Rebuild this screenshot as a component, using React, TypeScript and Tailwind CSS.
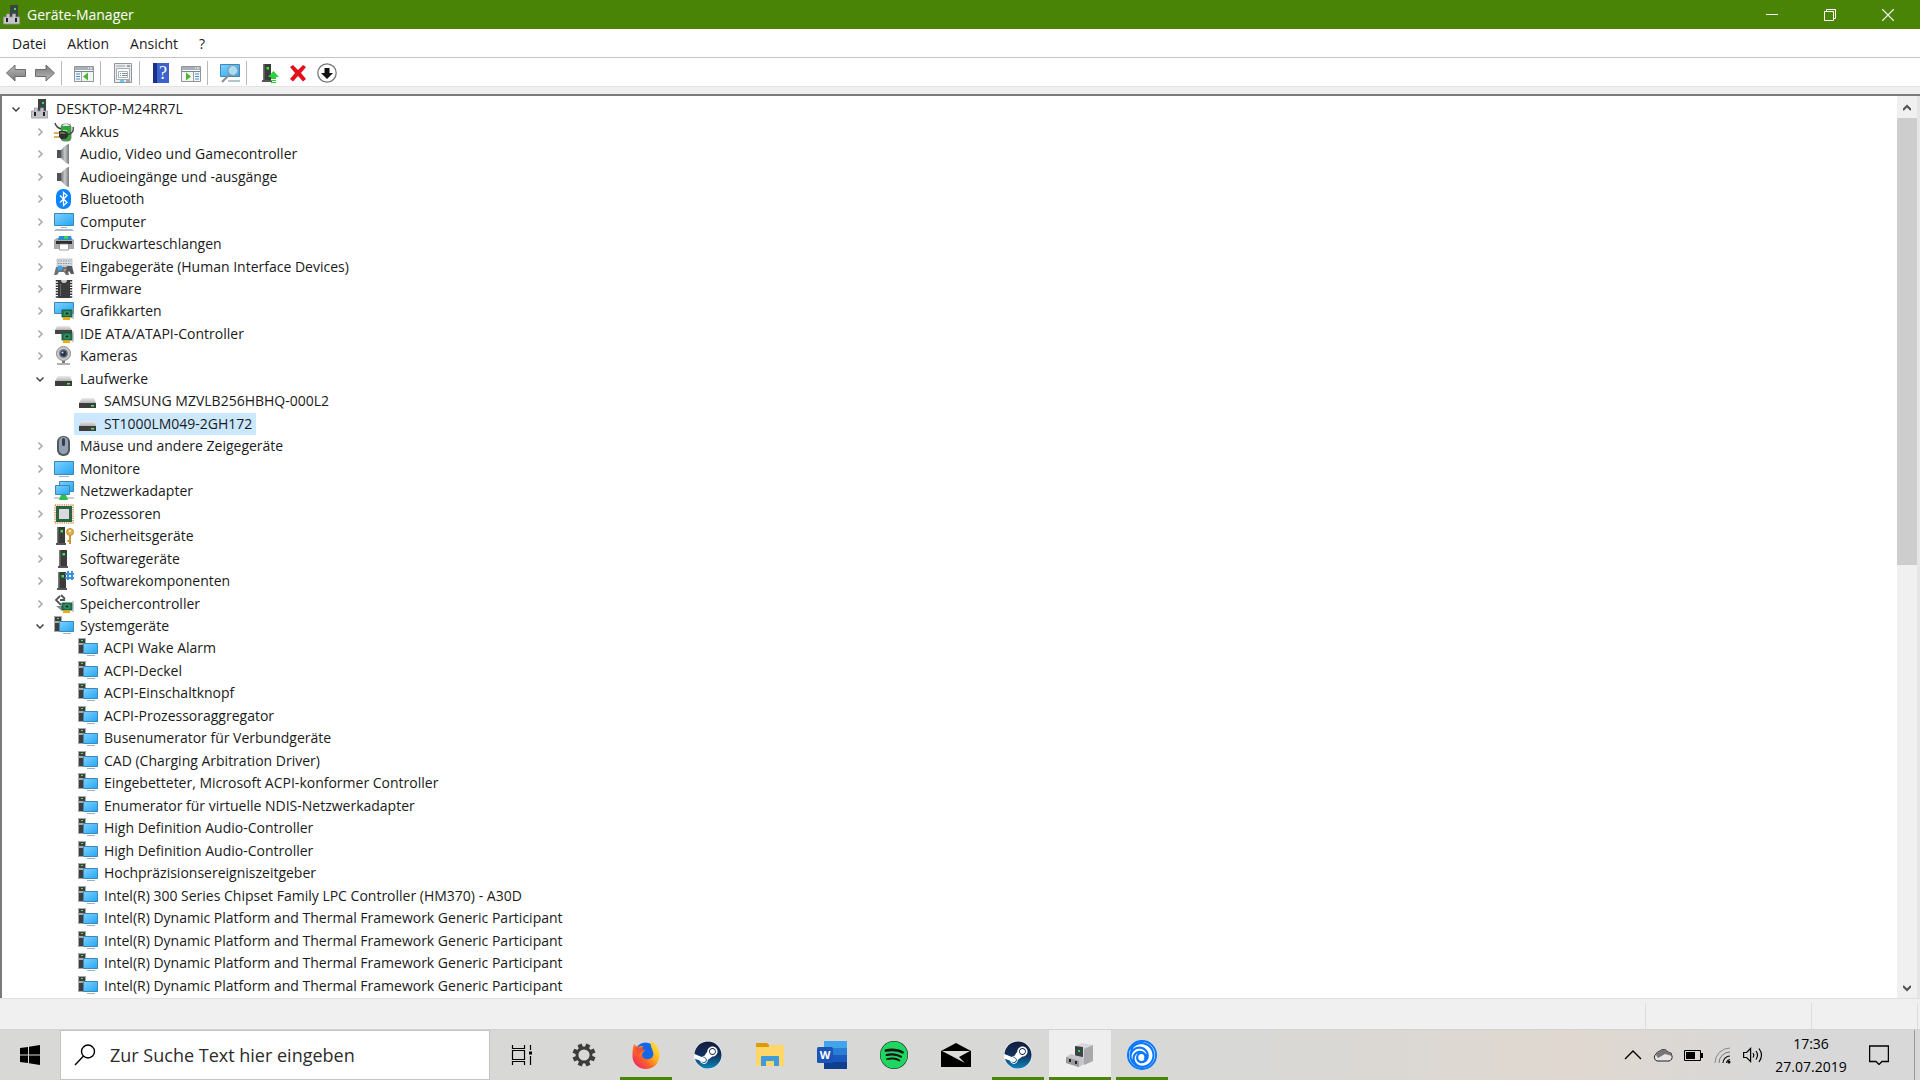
import type { ReactNode } from 'react';
import { FaSpotify, FaSteam } from 'react-icons/fa';
import { SiUbisoft } from 'react-icons/si';

type IconName =
  | 'root'
  | 'battery'
  | 'speaker'
  | 'bluetooth'
  | 'computer'
  | 'printer'
  | 'hid'
  | 'firmware'
  | 'gpu'
  | 'ide'
  | 'camera'
  | 'drive'
  | 'mouse'
  | 'monitor'
  | 'network'
  | 'cpu'
  | 'security'
  | 'software'
  | 'component'
  | 'storage'
  | 'system';

interface TreeNode {
  label: string;
  icon: IconName;
  level: 0 | 1 | 2;
  open?: boolean;
  selected?: boolean;
}

const nodes: TreeNode[] = [
  { label: 'DESKTOP-M24RR7L', icon: 'root', level: 0, open: true },
  { label: 'Akkus', icon: 'battery', level: 1 },
  { label: 'Audio, Video und Gamecontroller', icon: 'speaker', level: 1 },
  { label: 'Audioeingänge und -ausgänge', icon: 'speaker', level: 1 },
  { label: 'Bluetooth', icon: 'bluetooth', level: 1 },
  { label: 'Computer', icon: 'computer', level: 1 },
  { label: 'Druckwarteschlangen', icon: 'printer', level: 1 },
  { label: 'Eingabegeräte (Human Interface Devices)', icon: 'hid', level: 1 },
  { label: 'Firmware', icon: 'firmware', level: 1 },
  { label: 'Grafikkarten', icon: 'gpu', level: 1 },
  { label: 'IDE ATA/ATAPI-Controller', icon: 'ide', level: 1 },
  { label: 'Kameras', icon: 'camera', level: 1 },
  { label: 'Laufwerke', icon: 'drive', level: 1, open: true },
  { label: 'SAMSUNG MZVLB256HBHQ-000L2', icon: 'drive', level: 2 },
  { label: 'ST1000LM049-2GH172', icon: 'drive', level: 2, selected: true },
  { label: 'Mäuse und andere Zeigegeräte', icon: 'mouse', level: 1 },
  { label: 'Monitore', icon: 'monitor', level: 1 },
  { label: 'Netzwerkadapter', icon: 'network', level: 1 },
  { label: 'Prozessoren', icon: 'cpu', level: 1 },
  { label: 'Sicherheitsgeräte', icon: 'security', level: 1 },
  { label: 'Softwaregeräte', icon: 'software', level: 1 },
  { label: 'Softwarekomponenten', icon: 'component', level: 1 },
  { label: 'Speichercontroller', icon: 'storage', level: 1 },
  { label: 'Systemgeräte', icon: 'system', level: 1, open: true },
  { label: 'ACPI Wake Alarm', icon: 'system', level: 2 },
  { label: 'ACPI-Deckel', icon: 'system', level: 2 },
  { label: 'ACPI-Einschaltknopf', icon: 'system', level: 2 },
  { label: 'ACPI-Prozessoraggregator', icon: 'system', level: 2 },
  { label: 'Busenumerator für Verbundgeräte', icon: 'system', level: 2 },
  { label: 'CAD (Charging Arbitration Driver)', icon: 'system', level: 2 },
  { label: 'Eingebetteter, Microsoft ACPI-konformer Controller', icon: 'system', level: 2 },
  { label: 'Enumerator für virtuelle NDIS-Netzwerkadapter', icon: 'system', level: 2 },
  { label: 'High Definition Audio-Controller', icon: 'system', level: 2 },
  { label: 'High Definition Audio-Controller', icon: 'system', level: 2 },
  { label: 'Hochpräzisionsereigniszeitgeber', icon: 'system', level: 2 },
  { label: 'Intel(R) 300 Series Chipset Family LPC Controller (HM370) - A30D', icon: 'system', level: 2 },
  { label: 'Intel(R) Dynamic Platform and Thermal Framework Generic Participant', icon: 'system', level: 2 },
  { label: 'Intel(R) Dynamic Platform and Thermal Framework Generic Participant', icon: 'system', level: 2 },
  { label: 'Intel(R) Dynamic Platform and Thermal Framework Generic Participant', icon: 'system', level: 2 },
  { label: 'Intel(R) Dynamic Platform and Thermal Framework Generic Participant', icon: 'system', level: 2 },
];

const indent = {
  0: 'pl-1',
  1: 'pl-7',
  2: 'pl-[72px]',
};

// Shared gradients, referenced by id from every icon on the page
function Gradients() {
  return (
    <svg className="absolute h-0 w-0" aria-hidden="true">
      <defs>
        <linearGradient id="screen" x1="0" y1="0" x2="1" y2="1">
          <stop offset="0" stopColor="#7fd0ff" />
          <stop offset="1" stopColor="#22a7f5" />
        </linearGradient>
        <linearGradient id="metal" x1="0" y1="0" x2="1" y2="0">
          <stop offset="0" stopColor="#74777a" />
          <stop offset="0.5" stopColor="#c9cbcd" />
          <stop offset="1" stopColor="#6f7274" />
        </linearGradient>
        <linearGradient id="arrow" x1="0" y1="0" x2="0" y2="1">
          <stop offset="0" stopColor="#b9b9b9" />
          <stop offset="1" stopColor="#7a7a7a" />
        </linearGradient>
        <linearGradient id="lid" x1="0" y1="0" x2="0" y2="1">
          <stop offset="0" stopColor="#ececec" />
          <stop offset="1" stopColor="#b4b4b6" />
        </linearGradient>
        <linearGradient id="steam" x1="0" y1="0" x2="0" y2="1">
          <stop offset="0" stopColor="#141b3c" />
          <stop offset="0.5" stopColor="#12315f" />
          <stop offset="1" stopColor="#0e86bd" />
        </linearGradient>
        <linearGradient id="fox" x1="1" y1="0" x2="0" y2="1">
          <stop offset="0" stopColor="#fff04a" />
          <stop offset="0.4" stopColor="#ffb01f" />
          <stop offset="0.65" stopColor="#ff5a2b" />
          <stop offset="1" stopColor="#e8128a" />
        </linearGradient>
      </defs>
    </svg>
  );
}

function Tower({ x }: { x: number }) {
  return (
    <g transform={`translate(${x} 0)`}>
      <path d="M0 1h8v16H0z" fill="#3b3b3b" />
      <path d="M0 1h1.5v16H0z" fill="#777" />
      <path d="M-1 17h10v2H-1z" fill="#555" />
      <path d="M3.500 4h2.500v2.500h-2.500z" fill="#36ef3c" />
    </g>
  );
}

function Board() {
  return (
    <g>
      <path d="M8 9h10v7H8z" fill="#1d7a51" stroke="#145c3c" />
      <path d="M11 11h4v3h-4z" fill="#0d3324" stroke="#6fcf9a" strokeWidth="0.6" />
      <path d="M19 7v11" stroke="#9a9a9a" />
      <path d="M9 16.500h7v2.500H9z" fill="#f2a900" />
    </g>
  );
}

const deviceIcons: Record<IconName, ReactNode> = {
  root: (
    <>
      <path d="M8 0h8v12H8z" fill="#3d4344" />
      <path d="M12 3h2v2h-2z" fill="#30e84a" />
      <path d="M1.500 12h3V9h3v3h3V9h3v3h4v7h-16z" fill="#c4c4ca" stroke="#97989c" strokeWidth="0.8" />
      <path d="M4 13h2v4H4zM13 13h2v4h-2z" fill="#222" />
    </>
  ),
  battery: (
    <>
      <rect x="7" y="2" width="10" height="17" rx="3" fill="#33a63a" stroke="#6c756d" strokeWidth="0.8" />
      <path d="M8 4c2-3 6-3 8 0z" fill="#e2e4ee" />
      <path d="M9 8h4v7H9z" fill="#8be585" />
      <path d="M1 1c1 4 3 5 6 6M13 13c5-1 7-4 6-8" fill="none" stroke="#444" strokeWidth="1.4" />
      <path d="M0 11h5M0 15h5" stroke="#c79a2d" strokeWidth="1.4" />
      <path d="M5 9h5c3 0 4 2 4 4s-1 4-4 4H7l-2-2z" fill="#30302e" />
      <path d="M6 10h4l2 2H6z" fill="#6a6a66" />
    </>
  ),
  speaker: (
    <>
      <path d="M3 6h4v8H3z" fill="#4d5358" />
      <path d="M7 6l5-5 3-1v20l-3-1-5-5z" fill="url(#metal)" />
      <path d="M14.500 0v20" stroke="#85888a" />
    </>
  ),
  bluetooth: (
    <>
      <rect x="2" y="0" width="15" height="20" rx="7" fill="#0a84ff" />
      <path d="M6 6.500l7 7-3.500 3v-13l3.500 3-7 7" fill="none" stroke="#fff" strokeWidth="1.3" />
    </>
  ),
  computer: (
    <>
      <path d="M.5 1.500h19v12H.5z" fill="url(#screen)" stroke="#3f87b5" />
      <path d="M7 15h6v1H7z" fill="#9db2c0" />
      <path d="M2 17h16l2 2H0z" fill="#a6bccb" />
    </>
  ),
  printer: (
    <>
      <path d="M0 6l3-2h14l3 2v9H0z" fill="#a9abae" />
      <path d="M5 2h12l1 4H4z" fill="#2c8ad0" />
      <path d="M10 2h4v3h-4z" fill="#35d44a" />
      <path d="M2 7h16v3H2z" fill="#2c2c2c" />
      <path d="M5.500 10h9v6h-9z" fill="#fff" stroke="#888" strokeWidth="0.8" />
    </>
  ),
  hid: (
    <>
      <path d="M3 2h15v9H3z" fill="#dcdfe2" stroke="#aeb2b6" strokeWidth="0.7" />
      <path d="M4 4h13M4 6.500h13M4 9h13" stroke="#8b9096" strokeDasharray="1.500 1" />
      <path d="M2 10h11l2 8h-3l-2-3H5l-2 3H0z" fill="#6b737b" />
      <circle cx="6" cy="11" r="2.500" fill="#39a7ef" />
      <path d="M13 9h5l2 8h-3l-2-3-3 3z" fill="#50575e" />
      <circle cx="11" cy="13" r="1" fill="#e59a3a" />
    </>
  ),
  firmware: (
    <>
      <path d="M4 1h12v18H4z" fill="#3c3c3c" />
      <path d="M3 1v18M17 1v18" stroke="#333" strokeWidth="2.500" strokeDasharray="1.500 1.200" />
      <path d="M7 1a3 3 0 006 0z" fill="#c8c8c8" />
      <path d="M6 5h1v12H6z" fill="#686868" />
    </>
  ),
  gpu: (
    <>
      <path d="M.5 1.500h19v11H.5z" fill="url(#screen)" stroke="#3f87b5" />
      <Board />
    </>
  ),
  ide: (
    <>
      <path d="M3 2h12l3 4H1z" fill="url(#lid)" />
      <path d="M1 6h17v4H1z" fill="#444" />
      <Board />
    </>
  ),
  camera: (
    <>
      <circle cx="9.500" cy="7.500" r="7" fill="#c9cacc" stroke="#88898b" />
      <circle cx="9.500" cy="7.500" r="4.500" fill="#77797d" />
      <circle cx="9.500" cy="7.500" r="3" fill="#23354e" />
      <circle cx="8.500" cy="6.500" r="1" fill="#cfe5ff" />
      <path d="M8 15h3v2H8z" fill="#777" />
      <path d="M3 17h13v2H3z" fill="#aeb0b2" />
    </>
  ),
  drive: (
    <>
      <path d="M4 7h12l2 5H1z" fill="url(#lid)" />
      <path d="M1 12h17v5H1z" fill="#3c3d3c" />
      <path d="M13 14h3v1.500h-3z" fill="#4cf04c" />
    </>
  ),
  mouse: (
    <>
      <rect x="3" y="0" width="13" height="20" rx="6" fill="#505860" />
      <rect x="5" y="1" width="9" height="17" rx="4.500" fill="#92a2b2" />
      <rect x="8" y="2" width="3" height="8" rx="1.500" fill="#363d44" />
    </>
  ),
  monitor: (
    <>
      <path d="M.5 2.500h19v13H.5z" fill="url(#screen)" stroke="#3f87b5" />
      <path d="M5 17h10v1H5z" fill="#9db2c0" />
    </>
  ),
  network: (
    <>
      <path d="M5.500.5h14v10h-14z" fill="url(#screen)" stroke="#3f87b5" />
      <path d="M1.500 4.500h14v9h-14z" fill="url(#screen)" stroke="#3f87b5" />
      <path d="M0 16h20v2H0z" fill="#c9cfc9" />
      <path d="M7 14h5l2 5H5z" fill="#2fbf4b" />
    </>
  ),
  cpu: (
    <>
      <path d="M1 1h18v18H1z" fill="none" stroke="#c4993f" strokeWidth="1.500" strokeDasharray="1.200 1" />
      <path d="M2 2h16v16H2z" fill="#2d6247" />
      <path d="M5 5h10v10H5z" fill="#d9dadb" />
    </>
  ),
  security: (
    <>
      <Tower x={3} />
      <circle cx="16" cy="6" r="3.600" fill="#e2b04b" stroke="#b58221" strokeWidth="0.7" />
      <circle cx="16" cy="5" r="1" fill="#fff" />
      <path d="M15 9h2v9h-2zM13.500 14h2v2h-2z" fill="#cb9732" />
    </>
  ),
  software: <Tower x={5} />,
  component: (
    <>
      <Tower x={4} />
      <path d="M14 0v9M18 0v9M11 3h9M11 7h9" stroke="#3b93dd" strokeWidth="2" />
    </>
  ),
  storage: (
    <>
      <path d="M6 2L2 6l5 5M7 1l4 4M6 6h5" fill="none" stroke="#555" strokeWidth="1.800" />
      <path d="M2 12l6 5v-5z" fill="#8b8e90" />
      <Board />
    </>
  ),
  system: (
    <>
      <path d="M0 0h8v16H0z" fill="#a7a9ab" />
      <path d="M1 1h6v4H1zM1 7h4v8H1z" fill="#3d3f40" />
      <path d="M3 2h2v1H3z" fill="#45e84b" />
      <path d="M5.500 5.500h14v10h-14z" fill="url(#screen)" stroke="#3f87b5" />
      <path d="M9 17h8v1H9z" fill="#9db2c0" />
    </>
  ),
};

function Chevron({ open }: { open?: boolean }) {
  return (
    <svg className="h-5 w-5" viewBox="0 0 20 20" fill="none" strokeWidth="1.500">
      {open ? (
        <path d="M6.500 8.500l3.500 3.500 3.500-3.500" stroke="#404040" />
      ) : (
        <path d="M8.500 6.500l3.500 3.500-3.500 3.500" stroke="#a6a6a6" />
      )}
    </svg>
  );
}

function TreeRow({ node }: { node: TreeNode }) {
  return (
    <li
      role="treeitem"
      aria-level={node.level + 1}
      aria-selected={!!node.selected}
      className={`flex min-h-0 flex-1 items-center ${indent[node.level]}`}
    >
      {node.level < 2 && (
        <button type="button" aria-label={`${node.label} umschalten`} className="h-5 w-5">
          <Chevron open={node.open} />
        </button>
      )}
      <span
        className={`flex h-full items-center gap-1.5 whitespace-nowrap px-1 ${node.selected ? 'bg-[#cce8ff]' : ''}`}
      >
        <svg className="h-5 w-5" viewBox="0 0 20 20">
          {deviceIcons[node.icon]}
        </svg>
        {node.label}
      </span>
    </li>
  );
}

function Arrow({ flip }: { flip?: boolean }) {
  return (
    <svg className={`h-5 w-5 ${flip ? 'rotate-180' : ''}`} viewBox="0 0 20 20">
      <path d="M.5 10L9 2v4.500h10.500v7H9V18z" fill="url(#arrow)" stroke="#6c6c6c" />
    </svg>
  );
}

function WindowIcon({ right }: { right?: boolean }) {
  return (
    <svg className="h-5 w-5" viewBox="0 0 20 20">
      <path d="M.5 3.500h19v15H.5z" fill="#f4f4f4" stroke="#8e959b" />
      <path d="M1 4h18v3H1z" fill="#a9b0b6" />
      <path d="M14 5h1M16 5h2" stroke="#fff" />
      <path d="M1 8.500h18" stroke="#7d848a" />
      {right ? (
        <>
          <path d="M12.500 9v9" stroke="#9aa1a7" />
          <path d="M14 11h4M14 13.500h4M14 16h4" stroke="#4d8fc6" />
          <path d="M5 9.500l5 4-5 4z" fill="#4bb52d" />
        </>
      ) : (
        <>
          <path d="M7.500 9v9" stroke="#9aa1a7" />
          <path d="M2 11h4M2 13.500h4M2 16h4" stroke="#4d8fc6" />
          <path d="M14 9.500l-5 4 5 4z" fill="#4bb52d" />
        </>
      )}
    </svg>
  );
}

const toolGroups: { label: string; icon: ReactNode }[][] = [
  [
    { label: 'Zurück', icon: <Arrow /> },
    { label: 'Vorwärts', icon: <Arrow flip /> },
  ],
  [{ label: 'Konsolenstruktur', icon: <WindowIcon /> }],
  [
    {
      label: 'Eigenschaften',
      icon: (
        <svg className="h-5 w-5" viewBox="0 0 20 20">
          <path d="M1.500.5h17v19h-17z" fill="#e9ebed" stroke="#8f969c" />
          <path d="M3 3h9" stroke="#9aa0a5" />
          <path d="M14 3h3" stroke="#555" />
          <path d="M3.500 5.500h13v11h-13z" fill="#fafafa" stroke="#a5abb0" />
          <path d="M5.500 8.500h9v6h-9z" fill="#fff" stroke="#a8b4bd" />
          <path d="M7 10.500h1M7 12.500h1" stroke="#37a1d8" />
          <path d="M9 10.500h5M9 12.500h5" stroke="#888" />
          <path d="M7 18h4" stroke="#2ec3f0" strokeWidth="1.500" />
          <path d="M13 18h4" stroke="#8f969c" strokeWidth="1.500" />
        </svg>
      ),
    },
  ],
  [
    {
      label: 'Hilfe',
      icon: (
        <svg className="h-5 w-5" viewBox="0 0 20 20">
          <path d="M1 0h16v20H1z" fill="#3d62cc" />
          <path d="M1 0h4v20H1z" fill="#1a3185" />
          <text x="7" y="16" fontSize="18" fill="#fff" fontFamily="Liberation Serif, serif">
            ?
          </text>
        </svg>
      ),
    },
    { label: 'Aktionsbereich', icon: <WindowIcon right /> },
  ],
  [
    {
      label: 'Nach geänderter Hardware suchen',
      icon: (
        <svg className="h-5 w-5" viewBox="0 0 20 20">
          <path d="M.5 1.500h19v12H.5z" fill="url(#screen)" stroke="#3f87b5" />
          <path d="M8 18h12" stroke="#9db2c0" strokeWidth="1.500" />
          <path d="M10 11l-8 8" stroke="#8a8d90" strokeWidth="2" />
          <circle cx="13" cy="7.500" r="5" fill="#a8dcf8" stroke="#8a9ba8" strokeWidth="1.200" />
        </svg>
      ),
    },
  ],
  [
    {
      label: 'Gerät aktualisieren',
      icon: (
        <svg className="h-5 w-5" viewBox="0 0 20 20">
          <Tower x={4} />
          <path d="M9 14l5.500-6 5.500 6h-3v2h-5v-2zM12 17h5v1h-5zM12 19h5v1h-5z" fill="#2bd13a" />
        </svg>
      ),
    },
    {
      label: 'Gerät deinstallieren',
      icon: (
        <svg className="h-5 w-5" viewBox="0 0 20 20">
          <path d="M2 4l3-2 5 5 5-5 3 2-5 6 5 6-3 2.500-5-5.500-5 5.500L2 16l5-6z" fill="#e30f1b" />
        </svg>
      ),
    },
    {
      label: 'Gerät deaktivieren',
      icon: (
        <svg className="h-5 w-5" viewBox="0 0 20 20">
          <circle cx="10" cy="10" r="9.200" fill="#fff" stroke="#777" strokeWidth="1.300" />
          <path d="M7.500 5h5v5H16l-6 6-6-6h3.500z" fill="#111" />
        </svg>
      ),
    },
  ],
];

const steamIcon = (
  <span className="flex h-7 w-7 rounded-full bg-white">
    <FaSteam className="h-full w-full" style={{ fill: 'url(#steam)' }} />
  </span>
);

const taskbarApps: { label: string; state?: 'running' | 'active'; icon: ReactNode }[] = [
  {
    label: 'Aktive Anwendungen',
    icon: (
      <svg className="h-6 w-6" viewBox="0 0 24 24" fill="none" stroke="#000" strokeWidth="1.200">
        <path d="M2.500 7.500h12v9h-12zM2.500 2v3.500h12V2M2.500 22v-3.500h12V22M20.500 2v5M20.500 13v9" />
        <path d="M19 8.500h3v3h-3z" fill="#000" stroke="none" />
      </svg>
    ),
  },
  {
    label: 'Einstellungen',
    icon: (
      <svg className="h-6 w-6" viewBox="-12 -12 24 24">
        <circle r="7" fill="none" stroke="#3c3c3c" strokeWidth="2.800" />
        {[22, 67, 112, 157, 202, 247, 292, 337].map((angle) => (
          <path key={angle} d="M-2.200-11.500h4.400V-7h-4.400z" fill="#3c3c3c" transform={`rotate(${angle})`} />
        ))}
      </svg>
    ),
  },
  {
    label: 'Firefox',
    state: 'running',
    icon: (
      <svg className="h-7 w-7" viewBox="0 0 28 28">
        <circle cx="13.500" cy="12" r="10.500" fill="#1567e8" />
        <path
          d="M2 3c1 1 2 2 4 3 2-1 4-1 5-1-2 2-1 4 2 4-2 3-3 3-3 5 0 3 4 5 7 4 4-1 5-4 4-7-1-4-3-6-2-11 6 3 9 9 8.500 15C27 23 21 28 14 28 6 28 0 22 .5 14 .6 9 1 6 2 3z"
          fill="url(#fox)"
        />
        <path d="M3 6c2 0 5 1 8 0-1 2 0 3 2 3-2 2-5 2-7 5C4 11 3 9 3 6z" fill="#f0503c" />
      </svg>
    ),
  },
  { label: 'Steam', icon: steamIcon },
  {
    label: 'Explorer',
    icon: (
      <svg className="h-7 w-7" viewBox="0 0 28 28">
        <path d="M0 3a1 1 0 011-1h10l2 2v2H0z" fill="#dc9a07" />
        <path d="M0 6h13l2-2h12a1 1 0 011 1v20H0z" fill="#ffd769" />
        <path d="M5 25V16a1 1 0 011-1h16a1 1 0 011 1v9h-5v-5h-8v5z" fill="#3e9bdc" />
      </svg>
    ),
  },
  {
    label: 'Word',
    icon: (
      <svg className="h-7 w-[30px]" viewBox="0 0 30 28">
        <path d="M7 0h23v7H7z" fill="#41a5ee" />
        <path d="M7 7h23v7H7z" fill="#2b7cd3" />
        <path d="M7 14h23v7H7z" fill="#185abd" />
        <path d="M7 21h23v7H7z" fill="#103f91" />
        <rect y="6" width="16" height="16" rx="1.500" fill="#1b55b5" />
        <text x="8" y="18" fontSize="11" fontWeight="bold" fill="#fff" textAnchor="middle">
          W
        </text>
      </svg>
    ),
  },
  {
    label: 'Spotify',
    icon: (
      <span className="flex h-7 w-7 rounded-full bg-[#191414]">
        <FaSpotify className="h-full w-full text-[#1ed760]" />
      </span>
    ),
  },
  {
    label: 'Mail',
    icon: (
      <svg className="h-6 w-[30px]" viewBox="0 0 30 24">
        <path d="M0 8L15 0l15 8v16H0z" fill="#000" />
        <path d="M1 8h28l-11 6 6 6L1 8z" fill="#dcdcda" />
      </svg>
    ),
  },
  { label: 'Steam-Client', state: 'running', icon: steamIcon },
  {
    label: 'Geräte-Manager',
    state: 'active',
    icon: (
      <svg className="h-7 w-7" viewBox="0 0 28 28">
        <path d="M9 5l7-3 11 2v16l-9 4-9-4z" fill="#d9d9dc" />
        <path d="M18 8l9-4v16l-9 4z" fill="#a9a9ad" />
        <path d="M9 5l8 1v10l-8-1z" fill="#3c4145" />
        <path d="M12 9h2v2h-2z" fill="#23e63a" />
        <path d="M0 16l5-3 13 4v6l-5 3-13-4z" fill="#c6c6ca" />
        <path d="M0 16l13 4v6L0 22z" fill="#98989d" />
        <path d="M3 18h2v3H3zM9 20h2v3H9z" fill="#222" />
      </svg>
    ),
  },
  {
    label: 'Ubisoft',
    state: 'running',
    icon: (
      <span className="flex h-[30px] w-[30px] rounded-full border-2 border-[#0a78ff] bg-white">
        <SiUbisoft className="h-full w-full text-[#0a78ff]" />
      </span>
    ),
  },
];

const trayIcons: { label: string; icon: ReactNode }[] = [
  {
    label: 'Ausgeblendete Symbole einblenden',
    icon: <path d="M2 14l8-8 8 8" fill="none" stroke="#000" strokeWidth="1.400" />,
  },
  {
    label: 'OneDrive',
    icon: (
      <>
        <path d="M4 16a4 4 0 01-1-7 5 5 0 014-3 5 5 0 018 1 4 4 0 014 4 4 4 0 01-3 5z" fill="#e6e6e6" stroke="#222" />
        <path d="M3 10a5 5 0 014-4 5 5 0 018 1c2 0 3 1 4 4l-7-2-7 4z" fill="#777" />
      </>
    ),
  },
  {
    label: 'Akku',
    icon: (
      <>
        <path d="M1.500 5.500h16v10h-16z" fill="none" stroke="#000" />
        <path d="M3 7h9v7H3zM18 8h2v5h-2z" fill="#000" />
      </>
    ),
  },
  {
    label: 'WLAN',
    icon: (
      <>
        <path d="M2 18A15 15 0 0117 3" fill="none" stroke="#888" />
        <path d="M6 18A11 11 0 0117 7" fill="none" stroke="#777" />
        <path d="M10 18a7 7 0 017-7M13.500 18a4 4 0 013.500-3.500" fill="none" stroke="#111" strokeWidth="1.200" />
        <circle cx="16" cy="17" r="1.500" fill="#000" />
      </>
    ),
  },
  {
    label: 'Lautsprecher',
    icon: (
      <g fill="none" stroke="#000" strokeWidth="1.200">
        <path d="M.6 7.500h3l4-4v13l-4-4h-3z" />
        <path d="M10 8q1.500 2 0 4.500M13 6q3 4 0 8.500M16 3.500q5 6.500 0 13.500" />
      </g>
    ),
  },
];

function App() {
  return (
    <div className="flex h-screen flex-col overflow-hidden bg-[#f0f0f0] font-['Open_Sans','Noto_Sans',sans-serif] text-sm text-[#1a1a1a]">
      <Gradients />

      {/* Title bar */}
      <header className="flex h-[29px] shrink-0 items-center bg-[#4a8406] pl-0.5 text-white">
        <svg className="h-5 w-5" viewBox="0 0 20 20">
          {deviceIcons.root}
        </svg>
        <h1 className="ml-[5px]">Geräte-Manager</h1>
        <div className="ml-auto flex h-full pr-[3px]">
          <button type="button" aria-label="Minimieren" className="flex w-[58px] items-center justify-center">
            <svg className="h-3 w-3" viewBox="0 0 12 12" stroke="#fff">
              <path d="M0 5.500h12" />
            </svg>
          </button>
          <button type="button" aria-label="Wiederherstellen" className="flex w-[58px] items-center justify-center">
            <svg className="h-3 w-3" viewBox="0 0 12 12" fill="none" stroke="#fff">
              <path d="M.5 2.500h9v9h-9zM2.500 2.500v-2h9v9h-2" />
            </svg>
          </button>
          <button type="button" aria-label="Schließen" className="flex w-[58px] items-center justify-center">
            <svg className="h-3 w-3" viewBox="0 0 12 12" stroke="#fff" strokeWidth="1.200">
              <path d="M0 0l12 12M12 0L0 12" />
            </svg>
          </button>
        </div>
      </header>

      {/* Menu */}
      <nav className="flex h-[29px] shrink-0 items-center gap-[21px] border-b border-[#c4c4c8] bg-white pl-3 pt-px">
        <button type="button">Datei</button>
        <button type="button">Aktion</button>
        <button type="button">Ansicht</button>
        <button type="button">?</button>
      </nav>

      {/* Toolbar */}
      <div role="toolbar" className="flex h-[29px] shrink-0 items-center border-b border-[#e4e4e4] bg-white pl-1.5 pt-px">
        {toolGroups.map((group, i) => (
          <div key={i} className="flex h-full items-center">
            {i > 0 && <span className="ml-1.5 mr-3 h-6 w-px bg-[#b8b8b8]" />}
            <div className="flex gap-[9px]">
              {group.map((tool) => (
                <button key={tool.label} type="button" aria-label={tool.label}>
                  {tool.icon}
                </button>
              ))}
            </div>
          </div>
        ))}
      </div>

      {/* Device tree */}
      <main className="mt-[7px] flex min-h-0 flex-1 border-l-2 border-t-2 border-[#7a7a7a] bg-white">
        <ul role="tree" className="flex min-w-0 flex-1 flex-col pb-px pt-0.5">
          {nodes.map((node, i) => (
            <TreeRow key={i} node={node} />
          ))}
        </ul>
        <div className="flex w-[23px] flex-col border-r-[3px] border-[#e6e6e6] bg-[#f0f0f0] pt-0.5">
          <button type="button" aria-label="Nach oben" className="flex h-5 shrink-0 items-center justify-center">
            <svg className="h-2 w-2" viewBox="0 0 8 8" fill="none" stroke="#505050" strokeWidth="2">
              <path d="M0 6l4-4 4 4" />
            </svg>
          </button>
          <div className="min-h-0 flex-1">
            <div className="h-[52%] bg-[#cdcdcd]" />
          </div>
          <button type="button" aria-label="Nach unten" className="flex h-5 shrink-0 items-center justify-center">
            <svg className="h-2 w-2" viewBox="0 0 8 8" fill="none" stroke="#505050" strokeWidth="2">
              <path d="M0 2l4 4 4-4" />
            </svg>
          </button>
        </div>
      </main>

      {/* Status bar */}
      <div className="flex h-[31px] shrink-0 justify-end border-t border-[#e0e0e0] pr-0.5 pt-1">
        <span className="w-[166px] border-l border-[#dcdcdc]" />
        <span className="w-[107px] border-x border-[#dcdcdc]" />
      </div>

      {/* Taskbar */}
      <footer className="flex h-[51px] shrink-0 border-t border-[#d2d2d0] bg-linear-to-r from-[#d8d8d6] from-65% via-[#e0d8d0] via-82% to-[#d8d8d8] to-92% text-black">
        <button type="button" aria-label="Start" className="flex w-[60px] items-center justify-center">
          <svg className="h-5 w-5" viewBox="0 0 20 20">
            <path d="M0 3l8-1v7.500H0zM9 1.800L20 0v9.500H9zM0 10.500h8V18l-8-1zM9 10.500h11V20L9 18.200z" fill="#000" />
          </svg>
        </button>
        <div className="flex w-[430px] items-center gap-3 border border-[#c4c4c4] bg-white pl-[13px]">
          <svg className="h-6 w-6" viewBox="0 0 24 24" fill="none" stroke="#000" strokeWidth="1.400">
            <circle cx="14" cy="8.500" r="6.500" />
            <path d="M9.500 13L1 22" />
          </svg>
          <input
            type="text"
            aria-label="Suche"
            placeholder="Zur Suche Text hier eingeben"
            className="h-full min-w-0 flex-1 text-lg outline-none placeholder:text-[#2b2b2b]"
          />
        </div>
        <div className="ml-px flex">
          {taskbarApps.map((app) => (
            <button
              key={app.label}
              type="button"
              aria-label={app.label}
              className={`relative flex w-[62px] items-center justify-center ${
                app.state === 'active' ? 'bg-[#eeeeee]' : ''
              }`}
            >
              {app.icon}
              {app.state && (
                <span
                  className={`absolute bottom-0 h-[3px] bg-[#4a8406] ${
                    app.state === 'active' ? 'inset-x-0' : 'inset-x-[5px]'
                  }`}
                />
              )}
            </button>
          ))}
        </div>
        <div className="ml-auto flex items-center">
          <div className="flex gap-2.5">
            {trayIcons.map((tray) => (
              <button key={tray.label} type="button" aria-label={tray.label}>
                <svg className="h-5 w-5" viewBox="0 0 20 20">
                  {tray.icon}
                </svg>
              </button>
            ))}
          </div>
          <button type="button" className="w-24 text-center leading-[23px]">
            <time className="block">17:36</time>
            <time className="block">27.07.2019</time>
          </button>
          <button type="button" aria-label="Info-Center" className="mr-[15px] flex w-10 justify-center">
            <svg className="h-5 w-5" viewBox="0 0 20 20" fill="none" stroke="#000" strokeWidth="1.300">
              <path d="M.6 1h18.800v15.500h-6.400l-3 3-3-3H.6z" />
            </svg>
          </button>
          <button type="button" aria-label="Desktop anzeigen" className="h-[50px] w-1.5 border-l border-[#9a9a9a]" />
        </div>
      </footer>
    </div>
  );
}

export default App;
